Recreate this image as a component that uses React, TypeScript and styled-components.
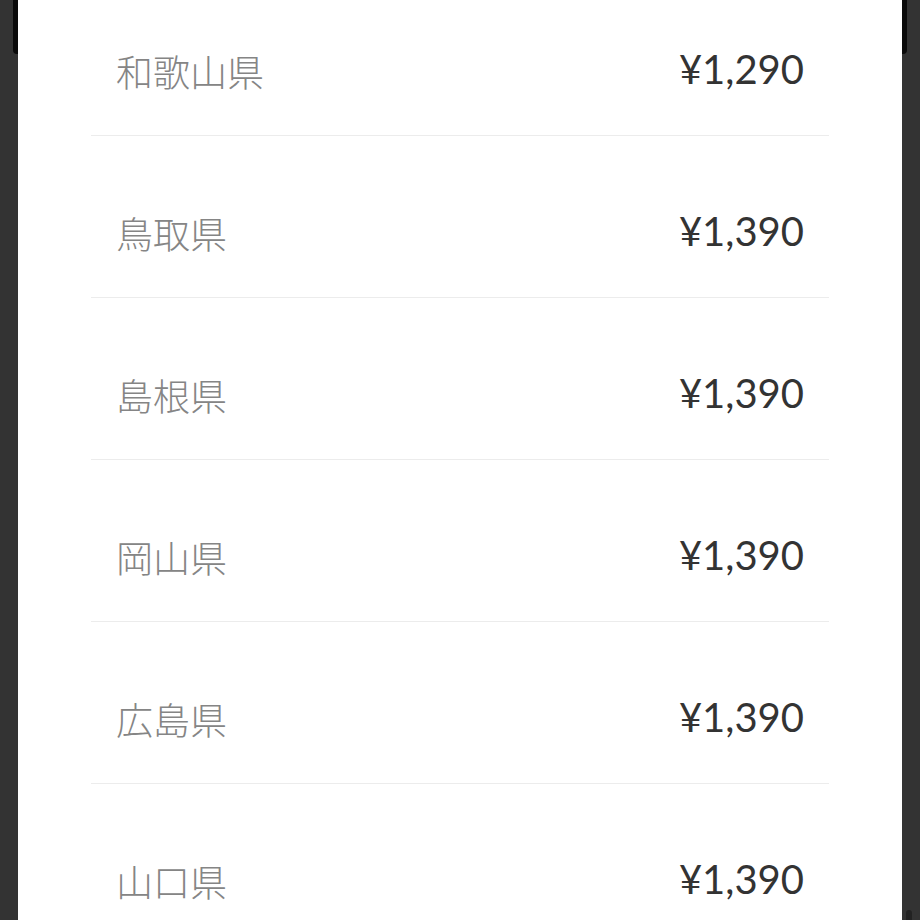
import styled, {createGlobalStyle} from "styled-components";

const GlobalStyle = createGlobalStyle`
  html, body {
    margin: 0;
    padding: 0;
    background: #333333;
    overflow: hidden;
  }
`;

const Screen = styled.div`
  display: flex;
  width: 920px;
  height: 920px;
  overflow: hidden;
`;

const Gutter = styled.div<{ $side: "left" | "right" }>`
  width: 18px;
  flex-shrink: 0;
  display: flex;
  flex-direction: column;
  justify-content: space-between;
  align-items: ${({$side}) => ($side === "left" ? "flex-end" : "flex-start")};
  background: #333333;
`;

const EdgeMark = styled.div<{ $side: "left" | "right" }>`
  width: 5px;
  height: 54px;
  background: #0a0a0a;
  border-radius: ${({$side}) => ($side === "left" ? "0 0 0 4px" : "0 0 4px 0")};
`;

const CornerNub = styled.div`
  width: 6px;
  height: 10px;
  margin-left: 4px;
  background: #222;
  border-radius: 3px 3px 0 0;
`;

const Panel = styled.div`
  flex: 1;
  background: #ffffff;
  padding: 0 73px;
  overflow: hidden;
`;

const List = styled.ul`
  list-style: none;
  margin: -26px 0 0;
  padding: 0;
`;

const Row = styled.li`
  display: flex;
  align-items: center;
  justify-content: space-between;
  height: 40px;
  padding: 75px 25px 46px;
  border-bottom: 1.5px solid #ececec;
`;

const Region = styled.span`
  font-family: "Noto Sans CJK JP", "Noto Sans", sans-serif;
  font-size: 37px;
  font-weight: 300;
  line-height: 40px;
  color: #858585;
  margin-top: 4px;
`;

const Price = styled.span`
  font-family: Lato, "Noto Sans", sans-serif;
  font-size: 40px;
  line-height: 40px;
  color: #333333;
`;

const rates = [
    {name: "和歌山県", price: "¥1,290"},
    {name: "鳥取県", price: "¥1,390"},
    {name: "島根県", price: "¥1,390"},
    {name: "岡山県", price: "¥1,390"},
    {name: "広島県", price: "¥1,390"},
    {name: "山口県", price: "¥1,390"},
];

export default function App() {
    return (
        <>
            <GlobalStyle/>
            <Screen>
                <Gutter $side="left">
                    <EdgeMark $side="left"/>
                </Gutter>
                <Panel>
                    <List>
                        {rates.map((r) => (
                            <Row key={r.name}>
                                <Region>{r.name}</Region>
                                <Price>{r.price}</Price>
                            </Row>
                        ))}
                    </List>
                </Panel>
                <Gutter $side="right">
                    <EdgeMark $side="right"/>
                    <CornerNub/>
                </Gutter>
            </Screen>
        </>
    );
}
